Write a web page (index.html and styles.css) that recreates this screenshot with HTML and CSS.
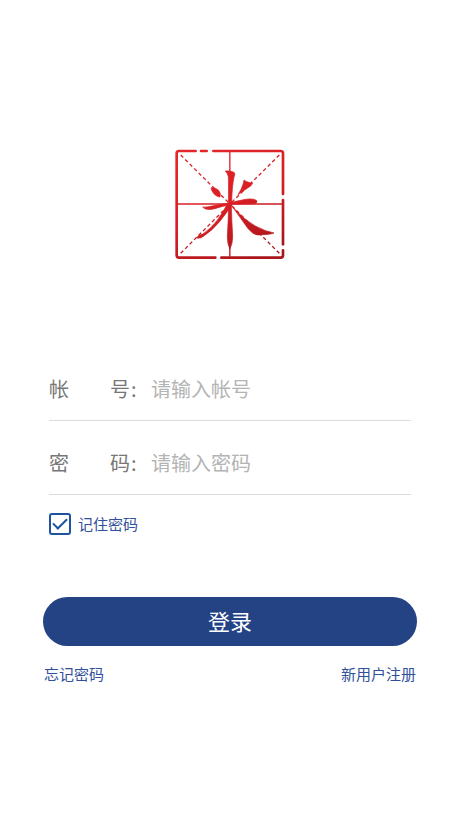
FILE: index.html
```html
<!DOCTYPE html>
<html lang="zh-CN">
<head>
<meta charset="utf-8">
<meta name="viewport" content="width=device-width, initial-scale=1">
<title>登录</title>
<link rel="stylesheet" href="styles.css">
</head>
<body>
<main class="login">
  <svg class="logo" viewBox="30 27 330 330" aria-hidden="true">
    <defs>
      <linearGradient id="red" gradientUnits="userSpaceOnUse" x1="100" y1="30" x2="260" y2="357">
        <stop offset="0" stop-color="#e3262a"/>
        <stop offset="0.5" stop-color="#d81f24"/>
        <stop offset="1" stop-color="#a9151b"/>
      </linearGradient>
    </defs>
    <g fill="none" stroke="url(#red)">
      <g stroke-width="8" stroke-linecap="round">
        <path d="M92 33H42Q35 33 35 40V346Q35 353 42 353H151"/>
        <path d="M108 33H125"/>
        <path d="M145 33H347Q354 33 354 40V162"/>
        <path d="M354 180V313"/>
        <path d="M354 331V346Q354 353 347 353H169"/>
      </g>
      <path stroke-width="4" d="M194.500 36V350M38 192H352V192.500"/>
      <path stroke-width="4" stroke-dasharray="11 8" d="M47 45L194 191M343 45L196 191M47 340L194 193M343 340L196 193"/>
    </g>
    <g fill="url(#red)" stroke="url(#red)" stroke-width="2" stroke-linejoin="round">
      <path d="M181 93Q196 91 207 97Q212 101 207 112Q201 140 200 188H190Q191 135 190 111Q188 100 181 93Z"/>
      <path d="M138 143Q151 142 160 150Q169 160 165 171Q158 172 148 163Q139 153 138 143Z"/>
      <path d="M237 120Q242 126 263 130Q260 138 248 144Q233 154 219 164Q230 147 234 133Z"/>
      <path d="M113 201Q126 203 151 196L188 190Q218 182 242 178Q267 174 276 183Q277 190 266 191Q235 192 202 193Q174 198 149 206Q123 213 113 201Z"/>
      <path d="M188 190L200 194Q185 220 163 246Q142 271 118 287Q106 297 95 294Q98 286 112 283Q137 267 158 239Q176 214 188 190Z"/>
      <path d="M191 190H199Q200 240 203 290Q203 311 195 327Q187 313 187 290Q190 240 191 190Z"/>
      <path d="M197 193Q214 216 243 239Q272 262 302 272Q318 276 327 279Q320 283 294 284Q277 288 264 280Q249 269 237 249Q218 222 197 193Z"/>
    </g>
  </svg>

  <form class="form">
    <div class="field">
      <label class="field-label" for="account"><span>帐</span><span>号</span></label>
      <span class="colon">:</span>
      <input class="field-input" id="account" type="text" placeholder="请输入帐号">
    </div>
    <div class="field">
      <label class="field-label" for="password"><span>密</span><span>码</span></label>
      <span class="colon">:</span>
      <input class="field-input" id="password" type="password" placeholder="请输入密码">
    </div>
    <div class="remember">
      <input class="check" id="remember" type="checkbox" checked>
      <label for="remember">记住密码</label>
    </div>
    <button class="submit" type="button">登录</button>
    <nav class="links">
      <a href="#forgot">忘记密码</a>
      <a href="#register">新用户注册</a>
    </nav>
  </form>
</main>
</body>
</html>
```
FILE: styles.css
```css
* {
  box-sizing: border-box;
}

body {
  margin: 0;
  background: #fff;
  color: #31509a;
  font-family: "Noto Sans CJK SC", sans-serif;
  font-size: 15px;
  line-height: 22px;
}

.login {
  display: flex;
  flex-direction: column;
  padding: 149px 43px 40px;
}

.logo {
  align-self: center;
  width: 110px;
  height: 110px;
  margin-bottom: 99px;
}

.form {
  display: flex;
  flex-direction: column;
}

.field {
  display: flex;
  align-items: center;
  height: 63px;
  margin: 0 6px 11px;
  border-bottom: 1px solid #dcdcdc;
  font-size: 20px;
  line-height: 30px;
}

.field-label {
  display: flex;
  flex: none;
  justify-content: space-between;
  width: 81px;
  color: #777;
}

.colon {
  width: 21px;
  padding-left: 1px;
  color: #777;
}

.field-input {
  flex: 1;
  min-width: 0;
  padding: 0;
  border: 0;
  outline: 0;
  background: none;
  color: #444;
  font: inherit;
}

.field-input::placeholder {
  color: #b4b4b4;
  opacity: 1;
}

.remember {
  display: flex;
  align-items: center;
  gap: 7px;
  margin: 7px 6px 0;
}

.check {
  appearance: none;
  display: grid;
  place-items: center;
  width: 22px;
  height: 22px;
  margin: 0;
  border: 2px solid #1f53a0;
  border-radius: 3px;
}

.check:checked::before {
  content: "";
  width: 12px;
  height: 6px;
  border: solid #1f53a0;
  border-width: 0 0 2px 2px;
  transform: translateY(-2px) rotate(-45deg);
}

.submit {
  height: 49px;
  margin-top: 62px;
  padding: 0 0 4px;
  border: 0;
  border-radius: 25px;
  background: #234385;
  color: #fff;
  font: inherit;
  font-size: 22px;
}

.links {
  display: flex;
  justify-content: space-between;
  margin-top: 17px;
  padding: 0 1px;
}

.links a {
  color: inherit;
  text-decoration: none;
}
```
